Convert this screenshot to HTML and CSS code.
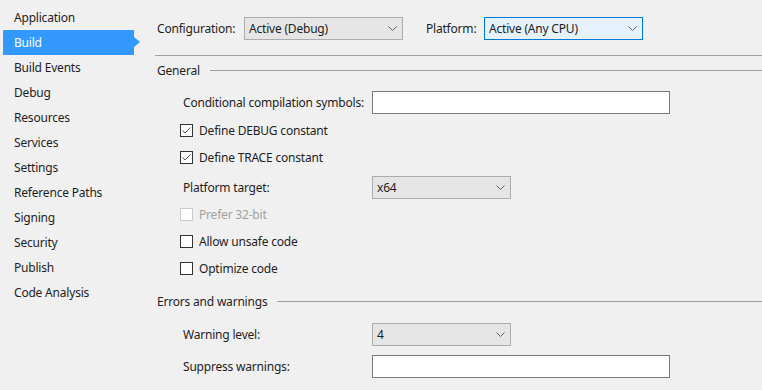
FILE: index.html
```html
<!DOCTYPE html>
<html lang="en">
<head>
    <meta charset="UTF-8">
    <title>Project Properties - Build</title>
    <link rel="stylesheet" href="styles.css">
</head>
<body>
    <div class="props-window">
        <nav class="props-tabs">
            <div class="props-tab">Application</div>
            <div class="props-tab active">Build</div>
            <div class="props-tab">Build Events</div>
            <div class="props-tab">Debug</div>
            <div class="props-tab">Resources</div>
            <div class="props-tab">Services</div>
            <div class="props-tab">Settings</div>
            <div class="props-tab">Reference Paths</div>
            <div class="props-tab">Signing</div>
            <div class="props-tab">Security</div>
            <div class="props-tab">Publish</div>
            <div class="props-tab">Code Analysis</div>
        </nav>

        <main class="props-page">
            <div class="props-toolbar">
                <span class="config-label">Configuration:</span>
                <div class="combo">
                    <span>Active (Debug)</span>
                    <svg class="chevron" width="9" height="5" viewBox="0 0 9 5"><path d="M0.5 0.5 L4.5 4.5 L8.5 0.5" fill="none" stroke="#606060" stroke-width="1"/></svg>
                </div>
                <span class="platform-label">Platform:</span>
                <div class="combo focused">
                    <span>Active (Any CPU)</span>
                    <svg class="chevron" width="9" height="5" viewBox="0 0 9 5"><path d="M0.5 0.5 L4.5 4.5 L8.5 0.5" fill="none" stroke="#606060" stroke-width="1"/></svg>
                </div>
            </div>

            <div class="props-rule"></div>

            <div class="group-title general-title"><span>General</span><i class="group-line"></i></div>

            <div class="field-row cond-row">
                <span class="field-label">Conditional compilation symbols:</span>
                <div class="text-box"></div>
            </div>

            <div class="check-row first-check">
                <span class="check-box checked">
                    <svg width="11" height="11" viewBox="0 0 11 11"><path d="M1.5 5.5 L4 8 L9.5 2.5" fill="none" stroke="#555" stroke-width="1"/></svg>
                </span>
                <span>Define DEBUG constant</span>
            </div>
            <div class="check-row">
                <span class="check-box checked">
                    <svg width="11" height="11" viewBox="0 0 11 11"><path d="M1.5 5.5 L4 8 L9.5 2.5" fill="none" stroke="#555" stroke-width="1"/></svg>
                </span>
                <span>Define TRACE constant</span>
            </div>

            <div class="field-row target-row">
                <span class="field-label">Platform target:</span>
                <div class="combo short">
                    <span>x64</span>
                    <svg class="chevron" width="9" height="5" viewBox="0 0 9 5"><path d="M0.5 0.5 L4.5 4.5 L8.5 0.5" fill="none" stroke="#606060" stroke-width="1"/></svg>
                </div>
            </div>

            <div class="check-row disabled prefer-row">
                <span class="check-box"></span>
                <span>Prefer 32-bit</span>
            </div>
            <div class="check-row">
                <span class="check-box"></span>
                <span>Allow unsafe code</span>
            </div>
            <div class="check-row">
                <span class="check-box"></span>
                <span>Optimize code</span>
            </div>

            <div class="group-title errors-title"><span>Errors and warnings</span><i class="group-line"></i></div>

            <div class="field-row warn-row">
                <span class="field-label">Warning level:</span>
                <div class="combo short">
                    <span>4</span>
                    <svg class="chevron" width="9" height="5" viewBox="0 0 9 5"><path d="M0.5 0.5 L4.5 4.5 L8.5 0.5" fill="none" stroke="#606060" stroke-width="1"/></svg>
                </div>
            </div>
            <div class="field-row suppress-row">
                <span class="field-label">Suppress warnings:</span>
                <div class="text-box"></div>
            </div>
        </main>
    </div>
</body>
</html>
```

FILE: styles.css
```css
body {
    margin: 0;
    background-color: #f0f0f0;
    color: #1e1e1e;
    font-family: "Noto Sans", "Open Sans", sans-serif;
    font-size: 12px;
    letter-spacing: -0.2px;
}

.props-window {
    display: flex;
    width: 762px;
    height: 390px;
    overflow: hidden;
}

/* left tab list */
.props-tabs {
    display: flex;
    flex-direction: column;
    width: 155px;
    flex-shrink: 0;
    padding-top: 5px;
}

.props-tab {
    position: relative;
    display: flex;
    align-items: center;
    height: 25px;
    width: 131px;
    margin-left: 3px;
    padding-left: 11px;
    box-sizing: border-box;
}

.props-tab.active {
    background-color: #3399ff;
    color: #fff;
}

.props-tab.active::after {
    content: "";
    position: absolute;
    right: -6px;
    top: 7px;
    border-left: 6px solid #3399ff;
    border-top: 5.5px solid transparent;
    border-bottom: 5.5px solid transparent;
}

/* right page */
.props-page {
    flex: 1;
    padding-top: 17px;
}

.props-toolbar {
    display: flex;
    align-items: center;
    height: 23px;
    padding-left: 2px;
}

.config-label {
    width: 87px;
}

.platform-label {
    width: 58px;
    margin-left: 23px;
}

.combo {
    display: flex;
    align-items: center;
    justify-content: space-between;
    width: 159px;
    height: 23px;
    box-sizing: border-box;
    padding: 0 5px 0 4px;
    border: 1px solid #acacac;
    background-color: #e5e5e5;
}

.combo.focused {
    border-color: #0078d7;
    background-color: #e5f1fb;
}

.combo.short {
    width: 139px;
}

.chevron {
    display: block;
}

.props-rule {
    margin-top: 15px;
    height: 1px;
    background-color: #a0a0a0;
}

.group-title {
    display: flex;
    align-items: center;
    gap: 10px;
    height: 20px;
    padding-left: 2px;
}

.group-line {
    flex: 1;
    height: 1px;
    background-color: #a0a0a0;
}

.general-title {
    margin-top: 4px;
}

.errors-title {
    margin-top: 9px;
}

.field-row {
    display: flex;
    align-items: center;
    height: 23px;
    padding-left: 28px;
}

.field-label {
    width: 189px;
    flex-shrink: 0;
}

.text-box {
    width: 298px;
    height: 23px;
    box-sizing: border-box;
    border: 1px solid #7a7a7a;
    background-color: #fff;
}

.cond-row {
    margin-top: 11px;
}

.target-row {
    margin-top: 5px;
}

.warn-row {
    margin-top: 12px;
}

.suppress-row {
    margin-top: 9px;
}

.check-row {
    display: flex;
    align-items: center;
    gap: 6px;
    height: 27px;
    padding-left: 25px;
}

.first-check {
    margin-top: 3px;
}

.prefer-row {
    margin-top: 2px;
}

.check-box {
    display: flex;
    align-items: center;
    justify-content: center;
    width: 13px;
    height: 13px;
    box-sizing: border-box;
    border: 1px solid #333;
    background-color: #fff;
}

.check-row.disabled {
    color: #a0a0a0;
}

.check-row.disabled .check-box {
    border-color: #cccccc;
}
```
